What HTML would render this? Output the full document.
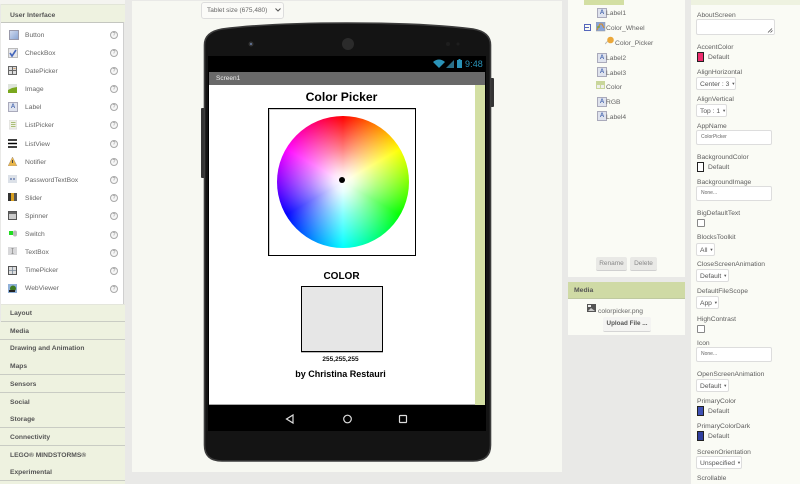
<!DOCTYPE html>
<html><head><meta charset="utf-8"><style>
html,body{margin:0;padding:0}
body{width:800px;height:484px;overflow:hidden;position:relative;background:#e9e9e7;font-family:"Liberation Sans",sans-serif;}
div,span,svg{position:absolute}
.t{white-space:nowrap;line-height:10px;height:10px;font-size:7px;color:#5a5a5a;margin-top:1px}
.p{left:25px;font-size:6.700px;color:#666;margin-top:1.500px}
.h{left:110px;width:6px;height:6px;border:.8px solid #aaa;border-radius:50%;color:#888;font-size:5px;line-height:6px;text-align:center;background:#f6f6f6}
.c{left:0;width:125px;height:17px;background:#eef2e0;border-bottom:1px solid #c9ccc4}
.ct{left:10px;font-weight:bold;color:#555;font-size:6.700px}
.l{left:697px;color:#5e5e5e;font-size:6.700px}
.d{left:708px;color:#5e5e5e;font-size:6.700px}
.sel{left:696px;height:11px;background:#fff;border:1px solid #ddd;border-radius:2px;box-sizing:content-box;color:#555;font-size:6.700px;line-height:11px;text-indent:3px;white-space:nowrap}
.sel b{font-size:4px;font-weight:normal;margin-left:2px;vertical-align:1px}
.in{left:696px;width:74px;height:13px;background:#fff;border:1px solid #ddd;border-radius:2px;color:#666;font-size:5px;line-height:13px;text-indent:4px;white-space:nowrap}
.sw{left:697px;width:5px;height:8px;border:1px solid #222}
.ck{left:697px;width:6px;height:6px;border:1px solid #888;background:#fff;border-radius:1px}
.ti{width:8px;height:8px;background:#dfe3ee;border:1px solid #aab;color:#4a6ab0;font-size:6px;line-height:8px;text-align:center;font-weight:bold}
</style></head><body>

<!-- left palette -->
<div style="left:0;top:0;width:125px;height:4px;background:#f4f4f0"></div>
<div style="left:1px;top:4px;width:124px;height:18px;background:#eef2e0;border-top:1px solid #e2e5d8;box-sizing:border-box"></div>
<div class="t" style="left:10px;top:10px;font-weight:bold;color:#555;font-size:6.800px">User Interface</div>
<div style="left:1px;top:22px;width:123px;height:282px;background:#fff;border-top:1px solid #c4c6c0;border-right:1px solid #cfcfcf;box-sizing:border-box"></div>

<div style="left:9px;top:30px;width:8px;height:8px;background:linear-gradient(135deg,#cfd9ee,#8ba6d4);border:.5px solid #99a"></div>
<div class="t p" style="top:29px">Button</div><div class="h" style="top:31px">?</div>
<svg style="left:8px;top:48px" width="10" height="10"><rect x=".5" y=".5" width="9" height="9" fill="#e6e6ea" stroke="#bbb"/><path d="M2 5l2 3 4-6" stroke="#4466bb" stroke-width="1.600" fill="none"/></svg>
<div class="t p" style="top:47px">CheckBox</div><div class="h" style="top:49px">?</div>
<svg style="left:8px;top:66px" width="10" height="10"><rect x=".5" y=".5" width="8" height="8" fill="#ddd" stroke="#666"/><path d="M1 4.500h8M4.500 1v8" stroke="#666"/><rect x="5.500" y="2" width="2" height="1" fill="#c96"/></svg>
<div class="t p" style="top:65px">DatePicker</div><div class="h" style="top:67px">?</div>
<svg style="left:8px;top:84px" width="10" height="10"><rect width="9" height="9" fill="#dfe5dd"/><path d="M0 9V6l4-2 5-1v6z" fill="#7aa81e"/></svg>
<div class="t p" style="top:83px">Image</div><div class="h" style="top:85px">?</div>
<div class="ti" style="left:8px;top:102px">A</div>
<div class="t p" style="top:101px">Label</div><div class="h" style="top:103px">?</div>
<svg style="left:9px;top:120px" width="8" height="10"><rect width="8" height="9" fill="#eef0e6" stroke="#ddd"/><path d="M2 2.500h4.500M2 4.500h4.500M2 6.500h4.500" stroke="#a9bd75"/></svg>
<div class="t p" style="top:119px">ListPicker</div><div class="h" style="top:121px">?</div>
<svg style="left:8px;top:139px" width="9" height="9"><path d="M0 1h9M0 4.500h9M0 8h9" stroke="#000" stroke-width="1.500"/></svg>
<div class="t p" style="top:138px">ListView</div><div class="h" style="top:140px">?</div>
<svg style="left:8px;top:157px" width="10" height="9"><path d="M4.500 0L9 9H0z" fill="#e9b64a" stroke="#a98" stroke-width=".5"/><path d="M4.500 3v3" stroke="#444"/></svg>
<div class="t p" style="top:156px">Notifier</div><div class="h" style="top:158px">?</div>
<svg style="left:8px;top:175px" width="9" height="9"><rect width="9" height="8" fill="#dce1e8"/><circle cx="3" cy="4" r="1" fill="#6a7fb0"/><circle cx="6" cy="4" r="1" fill="#6a7fb0"/></svg>
<div class="t p" style="top:174px">PasswordTextBox</div><div class="h" style="top:176px">?</div>
<svg style="left:8px;top:193px" width="9" height="9"><rect width="3" height="8" fill="#333"/><rect x="3" width="3" height="8" fill="#d9a020"/><rect x="6" width="3" height="8" fill="#555"/></svg>
<div class="t p" style="top:192px">Slider</div><div class="h" style="top:194px">?</div>
<svg style="left:8px;top:211px" width="10" height="9"><rect x=".5" y=".5" width="8" height="8" fill="#ccc" stroke="#555"/><rect x="1" y="1" width="7" height="2" fill="#666"/></svg>
<div class="t p" style="top:210px">Spinner</div><div class="h" style="top:212px">?</div>
<svg style="left:9px;top:230px" width="9" height="7"><rect x="4" y="0.500" width="4" height="6" rx="2" fill="#bbb"/><rect y="1" width="4" height="4" fill="#22dd22"/></svg>
<div class="t p" style="top:228px">Switch</div><div class="h" style="top:231px">?</div>
<svg style="left:8px;top:247px" width="9" height="9"><rect width="9" height="8" fill="#d8d8da"/><path d="M3.500 1.500h2M4.500 1.500v5M3.500 6.500h2" stroke="#888" stroke-width=".7"/></svg>
<div class="t p" style="top:246px">TextBox</div><div class="h" style="top:249px">?</div>
<svg style="left:8px;top:266px" width="10" height="10"><rect x=".5" y=".5" width="8" height="8" fill="#ddd" stroke="#555"/><path d="M4.500 1v7M1 4.500h7" stroke="#789" stroke-width=".8"/></svg>
<div class="t p" style="top:264.500px">TimePicker</div><div class="h" style="top:267px">?</div>
<svg style="left:8px;top:284px" width="10" height="10"><rect width="9" height="9" fill="#8fb0d8"/><circle cx="5" cy="4.500" r="3" fill="#3e7a22"/><rect x="1" y="6" width="6" height="2" fill="#222"/></svg>
<div class="t p" style="top:282.500px">WebViewer</div><div class="h" style="top:285px">?</div>

<div style="left:1px;top:304px;width:124px;height:18px;background:#eef2e0;border-bottom:1px solid #c9ccc4;box-sizing:border-box;border-top:1px solid #e4e6dc"></div>
<div class="t ct" style="top:308px">Layout</div>
<div class="c" style="top:322px"></div><div class="t ct" style="top:325.500px">Media</div>
<div class="c" style="top:339.500px"></div><div class="t ct" style="top:343px">Drawing and Animation</div>
<div class="c" style="top:357px"></div><div class="t ct" style="top:361px">Maps</div>
<div class="c" style="top:375px"></div><div class="t ct" style="top:378.500px">Sensors</div>
<div class="c" style="top:392.500px"></div><div class="t ct" style="top:396.500px">Social</div>
<div class="c" style="top:410px"></div><div class="t ct" style="top:414px">Storage</div>
<div class="c" style="top:428px"></div><div class="t ct" style="top:432px">Connectivity</div>
<div class="c" style="top:445.500px"></div><div class="t ct" style="top:449.500px">LEGO® MINDSTORMS®</div>
<div class="c" style="top:463px"></div><div class="t ct" style="top:467px">Experimental</div>
<div style="left:0;top:481px;width:125px;height:3px;background:#eef2e0"></div>

<!-- middle panel -->
<div style="left:132px;top:1px;width:430px;height:471px;background:#f7f8f2"></div>
<div style="left:201px;top:2px;width:81px;height:15px;background:#fbfbf8;border:1px solid #ddd;border-radius:3px"></div>
<div class="t" style="left:207px;top:5px;font-size:6.500px;color:#666">Tablet size (675,480)</div>
<svg style="left:275px;top:8px" width="6" height="4"><path d="M.5.500L3 3l2.500-2.500" stroke="#555" fill="none"/></svg>

<!-- phone -->
<div style="left:201px;top:108px;width:4px;height:70px;background:#333;border-radius:1px"></div>
<div style="left:490px;top:78px;width:4px;height:29px;background:#333;border-radius:1px"></div>
<svg style="left:200px;top:20px" width="296" height="445"><path d="M4.500 25Q4.500 12 22 9Q70 3 147 3Q225 3 273 9Q290.500 12 290.500 25L290.500 425Q290.500 441 273 441L22 441Q4.500 441 4.500 425Z" fill="#141414" stroke="#3c3c3c" stroke-width="1.600"/><circle cx="51" cy="24" r="2.500" fill="#333"/><circle cx="51" cy="24" r="1" fill="#6a7fa8"/><circle cx="148" cy="24" r="6" fill="#2b2b2b"/><circle cx="248" cy="24" r="2" fill="#1e1e1e"/><circle cx="258" cy="24" r="1.500" fill="#1e1e1e"/></svg>
<div style="left:208px;top:56px;width:278px;height:375px;background:#000"></div>
<svg style="left:433px;top:58px" width="50" height="12"><path d="M0 4Q6-1 12 4L6 10Z" fill="#2a93b8"/><path d="M13 10L21 2V10Z" fill="#2a6f88"/><rect x="24" y="2" width="5" height="8" fill="#2a93b8"/><rect x="25.500" y="1" width="2" height="1" fill="#2a93b8"/></svg>
<div class="t" style="left:465px;top:57px;height:12px;line-height:12px;font-size:9px;color:#2a93b8;letter-spacing:.1px">9:48</div>
<div style="left:209px;top:72px;width:276px;height:13px;background:#696969"></div>
<div class="t" style="left:216px;top:72.500px;color:#eee;font-size:6.500px;line-height:10px">Screen1</div>
<div style="left:209px;top:85px;width:266px;height:320px;background:#fff;border-bottom:1px solid #aaa;box-sizing:border-box"></div>
<div style="left:475px;top:85px;width:10px;height:320px;background:#d3dfa3"></div>
<div class="t" style="left:209px;width:265px;text-align:center;top:89px;height:14px;line-height:14px;font-size:12.200px;font-weight:bold;color:#000">Color Picker</div>

<div style="left:268px;top:108px;width:146px;height:146px;border:1px solid #000;box-shadow:inset 1px 1px 0 #ccc;background:#fff"></div>
<div style="left:277px;top:116px;width:132px;height:132px;border-radius:50%;background:conic-gradient(#f00,#ff0 60deg,#0f0 120deg,#0ff 180deg,#00f 240deg,#f0f 300deg,#f00)"></div>
<div style="left:277px;top:116px;width:132px;height:132px;border-radius:50%;background:radial-gradient(circle closest-side,#fff 0,rgba(255,255,255,.9) 15%,rgba(255,255,255,.5) 50%,rgba(255,255,255,0) 100%)"></div>
<div style="left:339px;top:177px;width:6px;height:6px;border-radius:50%;background:#000"></div>

<div class="t" style="left:209px;width:265px;text-align:center;top:270px;height:12px;line-height:12px;font-size:10px;font-weight:bold;color:#000">COLOR</div>
<div style="left:301px;top:286px;width:80px;height:64px;border:1px solid #000;background:#e6e6e6;box-shadow:0 1px 0 #bbb"></div>
<div class="t" style="left:208px;width:265px;text-align:center;top:354px;font-size:6.500px;font-weight:bold;color:#111">255,255,255</div>
<div class="t" style="left:208px;width:265px;text-align:center;top:367px;height:12px;line-height:12px;font-size:9px;font-weight:bold;color:#000">by Christina Restauri</div>

<svg style="left:285px;top:412px" width="125" height="14"><path d="M1.500 7L8 3V11Z" fill="none" stroke="#ddd" stroke-width="1.200"/><circle cx="62.500" cy="7" r="3.800" fill="none" stroke="#ddd" stroke-width="1.200"/><rect x="114.500" y="3.500" width="7" height="7" rx=".8" fill="none" stroke="#ddd" stroke-width="1.200"/></svg>

<!-- tree panel -->
<div style="left:568px;top:0;width:117px;height:277px;background:#fafbf5"></div>
<div style="left:584px;top:0;width:40px;height:5px;background:#d3dfa3"></div>
<div class="ti" style="left:597px;top:8px">A</div><div class="t" style="left:606px;top:8px;color:#666;font-size:6.700px">Label1</div>
<div style="left:584px;top:24px;width:5px;height:5px;border:.7px solid #5566bb"></div>
<div style="left:585px;top:26.500px;width:4px;height:1px;background:#5566bb"></div>
<svg style="left:596px;top:22px" width="10" height="10"><rect width="9" height="9" fill="#8aa5d8" stroke="#999" stroke-width=".5"/><path d="M1 8L4 2h2L8 6" stroke="#d88a22" fill="none"/><path d="M1 5h3" stroke="#6a2"/></svg>
<div class="t" style="left:606px;top:23px;color:#666;font-size:6.700px">Color_Wheel</div>
<svg style="left:605px;top:36px" width="10" height="10"><path d="M0 8L4 4" stroke="#bbb"/><circle cx="5.500" cy="4" r="3.300" fill="#eba83a"/></svg>
<div class="t" style="left:615px;top:38px;color:#666;font-size:6.700px">Color_Picker</div>
<div class="ti" style="left:597px;top:53px">A</div><div class="t" style="left:606px;top:53px;color:#666;font-size:6.700px">Label2</div>
<div class="ti" style="left:597px;top:67px">A</div><div class="t" style="left:606px;top:68px;color:#666;font-size:6.700px">Label3</div>
<svg style="left:596px;top:81px" width="10" height="10"><rect width="9" height="8" fill="#c9d69b"/><rect x="1" y="4" width="3" height="3" fill="#eee"/><rect x="5" y="4" width="3" height="3" fill="#eee"/></svg>
<div class="t" style="left:606px;top:82px;color:#666;font-size:6.700px">Color</div>
<div class="ti" style="left:597px;top:97px">A</div><div class="t" style="left:606px;top:97px;color:#666;font-size:6.700px">RGB</div>
<div class="ti" style="left:597px;top:111px">A</div><div class="t" style="left:606px;top:112px;color:#666;font-size:6.700px">Label4</div>
<div style="left:596px;top:257px;width:31px;height:13px;background:#e9e9e6;border-radius:2px;border-bottom:1px solid #d0d0d0;color:#888;font-size:6.500px;line-height:14px;text-align:center">Rename</div>
<div style="left:630px;top:257px;width:27px;height:13px;background:#e9e9e6;border-radius:2px;border-bottom:1px solid #d0d0d0;color:#888;font-size:6.500px;line-height:14px;text-align:center">Delete</div>

<div style="left:568px;top:282px;width:117px;height:53px;background:#fafbf5"></div>
<div style="left:568px;top:282px;width:117px;height:17px;background:#cfdaa5;border-bottom:1px solid #bfc9a0;box-sizing:border-box"></div>
<div class="t" style="left:574px;top:285px;font-weight:bold;color:#555;font-size:6.800px">Media</div>
<svg style="left:587px;top:304px" width="10" height="10"><rect width="9" height="8" fill="#555"/><rect x="1" y="1" width="3" height="2" fill="#eee"/><path d="M1 7l3-3 4 3z" fill="#ccc"/></svg>
<div class="t" style="left:598px;top:305.500px;color:#666;font-size:6.700px">colorpicker.png</div>
<div style="left:603px;top:317px;width:48px;height:14px;background:#f4f4f2;border-radius:2px;border-bottom:1px solid #d5d5d5;color:#555;font-size:6.300px;font-weight:bold;line-height:14px;text-align:center">Upload File ...</div>

<!-- properties -->
<div style="left:691px;top:0;width:109px;height:484px;background:#fafbf5"></div>
<div style="left:691px;top:0;width:109px;height:5px;background:#eef2e0"></div>
<div class="t l" style="top:10px">AboutScreen</div>
<div style="left:696px;top:19px;width:77px;height:14px;background:#fff;border:1px solid #ddd;border-radius:2px"></div>
<svg style="left:767px;top:28px" width="6" height="5"><path d="M1 4.500L5 .5M3.500 4.500L5.500 2.500" stroke="#555" stroke-width=".8"/></svg>
<div class="t l" style="top:42px">AccentColor</div>
<div class="sw" style="top:52px;background:#ee2d6e"></div><div class="t d" style="top:51.500px">Default</div>
<div class="t l" style="top:67px">AlignHorizontal</div>
<div class="sel" style="top:77px;width:38px">Center : 3<b>▼</b></div>
<div class="t l" style="top:94px">AlignVertical</div>
<div class="sel" style="top:104px;width:29px">Top : 1<b>▼</b></div>
<div class="t l" style="top:120.500px">AppName</div>
<div class="in" style="top:130px">ColorPicker</div>
<div class="t l" style="top:151.500px">BackgroundColor</div>
<div class="sw" style="top:162px;background:#fff"></div><div class="t d" style="top:161.500px">Default</div>
<div class="t l" style="top:176.500px">BackgroundImage</div>
<div class="in" style="top:186px">None...</div>
<div class="t l" style="top:207.500px">BigDefaultText</div>
<div class="ck" style="top:219px"></div>
<div class="t l" style="top:232px">BlocksToolkit</div>
<div class="sel" style="top:243px;width:17px">All<b>▼</b></div>
<div class="t l" style="top:259px">CloseScreenAnimation</div>
<div class="sel" style="top:269px;width:31px">Default<b>▼</b></div>
<div class="t l" style="top:286px">DefaultFileScope</div>
<div class="sel" style="top:296px;width:21px">App<b>▼</b></div>
<div class="t l" style="top:313.500px">HighContrast</div>
<div class="ck" style="top:325px"></div>
<div class="t l" style="top:338px">Icon</div>
<div class="in" style="top:347px">None...</div>
<div class="t l" style="top:369px">OpenScreenAnimation</div>
<div class="sel" style="top:379px;width:31px">Default<b>▼</b></div>
<div class="t l" style="top:395.500px">PrimaryColor</div>
<div class="sw" style="top:406px;background:#3f51b5"></div><div class="t d" style="top:406px">Default</div>
<div class="t l" style="top:421px">PrimaryColorDark</div>
<div class="sw" style="top:431px;background:#303f9f"></div><div class="t d" style="top:431px">Default</div>
<div class="t l" style="top:446.500px">ScreenOrientation</div>
<div class="sel" style="top:456px;width:44px">Unspecified<b>▼</b></div>
<div class="t l" style="top:473px">Scrollable</div>
</body></html>
